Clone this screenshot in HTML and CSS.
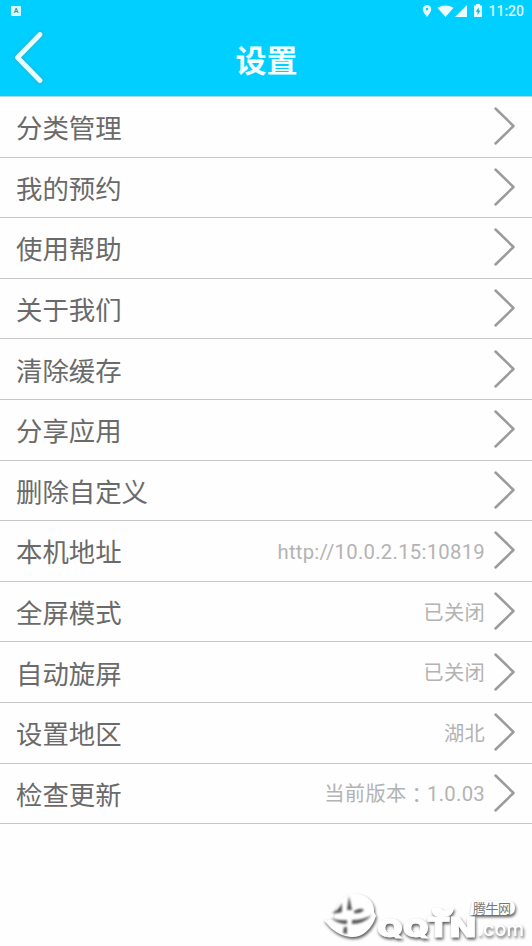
FILE: index.html
```html
<!DOCTYPE html>
<html lang="zh-CN">
<head>
<meta charset="utf-8">
<title>设置</title>
<link rel="stylesheet" href="styles.css">
</head>
<body>
<svg class="defs" width="0" height="0">
  <symbol id="next" viewBox="0 0 24 40"><path d="M2.500 2.500 20.500 20 2.500 37.500"/></symbol>
</svg>
<header class="header">
  <div class="status">
    <span class="badge">A</span>
    <div class="indicators">
      <svg width="56" height="14" viewBox="0 0 56 14" fill="#e8fdff">
        <path fill-rule="evenodd" d="M5 1a4.200 4.200 0 0 0-4.200 4.200C.8 8.200 5 13 5 13s4.200-4.800 4.200-7.800A4.200 4.200 0 0 0 5 1zm0 2.800a1.300 1.300 0 1 1 0 2.600 1.300 1.300 0 0 1 0-2.600z"/>
        <path d="M15.500 3.800Q23.500-1 31.500 3.800L23.500 13z"/>
        <path d="M45 1v12H33z"/>
      </svg>
      <svg class="battery" width="10" height="14" viewBox="0 0 10 14">
        <path fill="#e8fdff" d="M3 0h4v1.500h2V13H1V1.500h2z"/>
        <path fill="#19b4d2" d="M5.700 3.200 2.800 7.800h1.800v3.500l2.800-4.800H5.700z"/>
      </svg>
      <span class="clock">11:20</span>
    </div>
  </div>
  <div class="titlebar">
    <svg class="back" width="32" height="54" viewBox="0 0 32 54"><path d="M27 4.500 4.500 27.500 27 50.500"/></svg>
    <h1>设置</h1>
  </div>
</header>
<main class="list">
  <div class="row"><span class="label">分类管理</span><svg class="next"><use href="#next"/></svg></div>
  <div class="row"><span class="label">我的预约</span><svg class="next"><use href="#next"/></svg></div>
  <div class="row"><span class="label">使用帮助</span><svg class="next"><use href="#next"/></svg></div>
  <div class="row"><span class="label">关于我们</span><svg class="next"><use href="#next"/></svg></div>
  <div class="row"><span class="label">清除缓存</span><svg class="next"><use href="#next"/></svg></div>
  <div class="row"><span class="label">分享应用</span><svg class="next"><use href="#next"/></svg></div>
  <div class="row"><span class="label">删除自定义</span><svg class="next"><use href="#next"/></svg></div>
  <div class="row"><span class="label">本机地址</span><span class="value">http://10.0.2.15:10819</span><svg class="next"><use href="#next"/></svg></div>
  <div class="row"><span class="label">全屏模式</span><span class="value">已关闭</span><svg class="next"><use href="#next"/></svg></div>
  <div class="row"><span class="label">自动旋屏</span><span class="value">已关闭</span><svg class="next"><use href="#next"/></svg></div>
  <div class="row"><span class="label">设置地区</span><span class="value">湖北</span><svg class="next"><use href="#next"/></svg></div>
  <div class="row"><span class="label">检查更新</span><span class="value">当前版本<span class="colon" lang="zh-TW">：</span>1.0.03</span><svg class="next"><use href="#next"/></svg></div>
</main>
<svg class="watermark" width="222" height="66" viewBox="0 0 222 66">
  <g class="raised">
    <path d="M26 28C30 18 38 13 47 14C58 15 65 23 64 32L66 36C62 50 51 58 41 57C28 56 20 48 13 39Q19 41 24 39Z"/>
    <path d="M122 28H130Q135 33 140 28H144Q143 37 134 37H128Q121 36 122 28z"/>
    <path d="M162 21H198Q205 21 205 28T198 35H160z"/>
    <text class="brand" x="67" y="56.500" textLength="52" lengthAdjust="spacingAndGlyphs">QQ</text>
    <text class="brand tall" x="117" y="56.500" textLength="49" lengthAdjust="spacingAndGlyphs">TN</text>
    <text class="domain" x="167" y="56" textLength="47" lengthAdjust="spacingAndGlyphs">.com</text>
  </g>
  <g class="carved">
    <path d="M39 16 42 30H37z"/>
    <path d="M32 23V32Q27 34 22 33Q29 30 32 23z"/>
    <path d="M44 31Q51 27 54 30Q50 34 44 33z"/>
    <path d="M21 38Q29 41 37 40V44Q28 44 21 38zM42 40Q53 40 62 35Q54 44 42 44z"/>
    <path d="M34 47H37V54L33 53z"/>
  </g>
  <text class="site" x="163" y="33" textLength="38">腾牛网</text>
</svg>
</body>
</html>
```
FILE: styles.css
```css
* { box-sizing: border-box; }
body {
  margin: 0;
  height: 946px;
  overflow: hidden;
  position: relative;
  background: #fefefe;
  font-family: Roboto, "Noto Sans CJK SC", sans-serif;
}
.defs { position: absolute; }
.header { height: 96.9px; background: #00cfff; border-bottom: 1px solid #a9dce6; }
.status {
  height: 24px;
  padding: 0 8px 2px 11px;
  display: flex;
  align-items: center;
  justify-content: space-between;
}
.badge {
  width: 10px;
  height: 10px;
  border-radius: 1px;
  background: #d5faff;
  color: #3795a5;
  font-size: 7px;
  font-weight: 700;
  line-height: 10px;
  text-align: center;
}
.indicators { display: flex; align-items: center; }
.battery { margin-right: 5px; margin-left: -5px; }
.clock { color: #d5f9ff; font-size: 14px; font-weight: 500; line-height: 22px; }
.titlebar { height: 72px; display: grid; grid-template-columns: 60px 1fr 60px; align-items: center; }
.back {
  margin: -6px 0 0 13px;
  fill: none;
  stroke: #eaffff;
  stroke-width: 4.8;
  stroke-linecap: round;
  stroke-linejoin: round;
  filter: drop-shadow(0 0 1.5px #4a9dad);
}
h1 { margin: 0; padding: 2px 0 0 1px; color: #f4ffff; font-size: 31px; line-height: 69px; font-weight: 700; text-align: center; }
.row {
  height: 60.62px;
  padding: 0 15.5px 0 16px;
  display: flex;
  align-items: center;
  border-bottom: 1px solid #c6c6c6;
}
.label { flex: 1; color: #6a6a6a; font-size: 26.4px; line-height: 38px; padding-top: 5px; }
.value { color: #b3b3b3; font-size: 20.3px; letter-spacing: .27px; line-height: 30px; margin-right: 7.5px; padding-top: 2px; }
.colon { font-family: "Noto Sans CJK TC", sans-serif; line-height: 0; vertical-align: -2px; }
.next {
  width: 24px;
  height: 40px;
  margin-top: -1px;
  fill: none;
  stroke: #9b9b9b;
  stroke-width: 2.5;
  stroke-linecap: round;
  stroke-linejoin: round;
}
.watermark { position: absolute; left: 310px; top: 880px; }
.raised { fill: #fff; filter: drop-shadow(1.5px 2px 1.5px rgba(0, 0, 0, .65)); }
.carved { fill: #555; filter: blur(.8px); }
.brand { font: 900 24px Inter, sans-serif; stroke: #fff; stroke-width: .8; }
.tall { font-size: 27px; }
.domain { font: 500 20px Inter, sans-serif; }
.site { font: 13px "Noto Sans CJK SC", sans-serif; fill: #777; }
```
